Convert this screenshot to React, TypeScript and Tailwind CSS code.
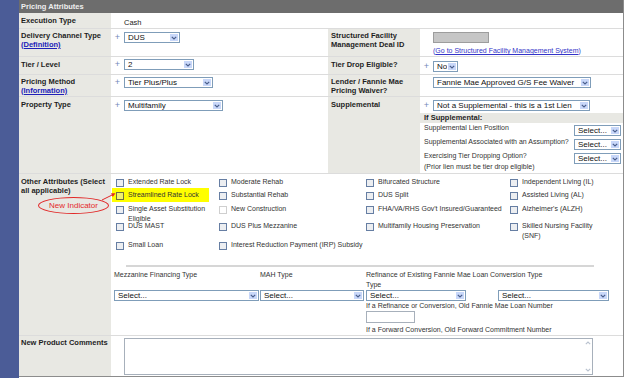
import React from 'react';

function Chevron() {
  return (
    <svg width="6" height="4" viewBox="0 0 6 4">
      <path d="M0.8 0.8 L3 3 L5.2 0.8" fill="none" stroke="#4a5f8c" strokeWidth="1.2" />
    </svg>
  );
}

function Select({ value, className }: { value: string; className: string }) {
  return (
    <div className={`flex h-[11px] shrink-0 border border-[#7f9db9] bg-white ${className}`}>
      <span className="min-w-0 flex-1 overflow-hidden whitespace-nowrap pl-[3px] text-[8px] leading-[9px] text-[#111]">
        {value}
      </span>
      <span className="m-px flex w-[8px] items-center justify-center bg-[#c8d7f9]">
        <Chevron />
      </span>
    </div>
  );
}

function Plus() {
  return <span className="w-[13px] shrink-0 text-center text-[9px] leading-[11px] text-[#7088b8]">+</span>;
}

function Label({ children, className = '' }: { children: React.ReactNode; className?: string }) {
  return (
    <div
      className={`w-[92px] shrink-0 bg-[#e8e8e3] pl-[2px] text-[7.5px] font-bold leading-[9px] text-[#1e1e1e] ${className}`}
    >
      {children}
    </div>
  );
}

function Box({ kind }: { kind?: 'off' | 'hl' }) {
  const cls =
    kind === 'off'
      ? 'border-[#cfcfcf] bg-white'
      : kind === 'hl'
        ? 'border-[#6d6d45] bg-[#f0f070]'
        : 'border-[#667ea3] bg-[#eceef1]';
  return <span className={`mt-[2px] h-[8px] w-[8px] shrink-0 border ${cls}`} />;
}

function Check({ label, kind, wrapClass = '' }: { label: string; kind?: 'off' | 'hl'; wrapClass?: string }) {
  return (
    <div className="flex items-start gap-[4px]">
      <Box kind={kind} />
      <span className={`text-[7px] leading-[10px] text-[#333] ${wrapClass}`}>{label}</span>
    </div>
  );
}

export default function App() {
  return (
    <div className="flex h-[378px] w-[626px] overflow-hidden bg-white font-['Liberation_Sans',Arial,sans-serif] text-[#222]">
      <div className="w-[19px] shrink-0 bg-[#4b5c97]" />
      <div className="flex h-[377px] w-[605px] shrink-0 flex-col border-r border-b border-[#8c8c8c]">
        <div className="h-[13px] shrink-0 bg-[#6d6d6d] pl-[2px] text-[7.5px] font-bold leading-[13px] text-[#efefef]">
          Pricing Attributes
        </div>

        {/* Execution type */}
        <div className="flex h-[16px] shrink-0 border-b border-[#dcdcdc]">
          <Label className="pt-[3px]">Execution Type</Label>
          <div className="pl-[13px] pt-[5px] text-[7.5px] leading-[9px]">Cash</div>
        </div>

        {/* Delivery channel / structured facility */}
        <div className="flex h-[28px] shrink-0 border-b border-[#dcdcdc]">
          <Label className="pt-[2px]">
            Delivery Channel Type
            <br />
            <span className="text-[#2020b8] underline">(Definition)</span>
          </Label>
          <div className="flex w-[217px] shrink-0 items-start pt-[3px]">
            <Plus />
            <Select value="DUS" className="w-[56px]" />
          </div>
          <Label className="pl-[3px] pt-[2px]">Structured Facility Management Deal ID</Label>
          <div className="flex flex-1 flex-col items-start pl-[13px] pt-[3px]">
            <div className="h-[11px] w-[56px] border border-[#9d9d9d] bg-[#c6c6c6]" />
            <div className="mt-[3px] text-[7px] leading-[9px] text-[#3434c8]">
              (<span className="underline">Go to Structured Facility Management System</span>)
            </div>
          </div>
        </div>

        {/* Tier */}
        <div className="flex h-[18px] shrink-0 border-b border-[#dcdcdc]">
          <Label className="pt-[3px]">Tier / Level</Label>
          <div className="flex w-[217px] shrink-0 items-start pt-[2px]">
            <Plus />
            <Select value="2" className="w-[70px]" />
          </div>
          <Label className="pl-[3px] pt-[3px]">Tier Drop Eligible?</Label>
          <div className="flex flex-1 items-start pt-[4px]">
            <Plus />
            <Select value="No" className="w-[25px]" />
          </div>
        </div>

        {/* Pricing method */}
        <div className="flex h-[22px] shrink-0 border-b border-[#dcdcdc]">
          <Label className="pt-[2px]">
            Pricing Method
            <br />
            <span className="text-[#2020b8] underline">(Information)</span>
          </Label>
          <div className="flex w-[217px] shrink-0 items-start pt-[2px]">
            <Plus />
            <Select value="Tier Plus/Plus" className="w-[89px]" />
          </div>
          <Label className="pl-[3px] pt-[2px]">Lender / Fannie Mae Pricing Waiver?</Label>
          <div className="flex flex-1 items-start pl-[13px] pt-[2px]">
            <Select value="Fannie Mae Approved G/S Fee Waiver" className="w-[158px]" />
          </div>
        </div>

        {/* Property / supplemental */}
        <div className="flex h-[77px] shrink-0 border-b border-[#dcdcdc]">
          <Label className="pt-[3px]">Property Type</Label>
          <div className="flex w-[217px] shrink-0 items-start pt-[3px]">
            <Plus />
            <Select value="Multifamily" className="w-[99px]" />
          </div>
          <Label className="pl-[3px] pt-[3px]">Supplemental</Label>
          <div className="flex flex-1 flex-col">
            <div className="flex items-start pt-[3px]">
              <Plus />
              <Select value="Not a Supplemental - this is a 1st Lien" className="w-[157px]" />
            </div>
            <div className="mt-[2px] h-[10px] bg-[#e8e8e3] pl-[4px] text-[7.5px] font-bold leading-[10px] text-[#1e1e1e]">
              If Supplemental:
            </div>
            <div className="flex h-[14px] items-start justify-between pl-[4px] pr-[2px] text-[7px] text-[#333]">
              <span className="leading-[10px]">Supplemental Lien Position</span>
              <Select value="Select..." className="mt-[2px] w-[47px]" />
            </div>
            <div className="flex h-[14px] items-start justify-between pl-[4px] pr-[2px] text-[7px] text-[#333]">
              <span className="leading-[10px]">Supplemental Associated with an Assumption?</span>
              <Select value="Select..." className="mt-[2px] w-[47px]" />
            </div>
            <div className="flex items-start justify-between pl-[4px] pr-[2px] text-[7px] text-[#333]">
              <span className="-mt-[1px] leading-[11px]">
                Exercising Tier Dropping Option?
                <br />
                (Prior lien must be tier drop eligible)
              </span>
              <Select value="Select..." className="mt-[2px] w-[47px]" />
            </div>
          </div>
        </div>

        {/* Other attributes */}
        <div className="relative flex h-[162px] shrink-0 border-b border-[#dcdcdc]">
          <Label className="pt-[3px]">Other Attributes (Select all applicable)</Label>
          <div className="flex flex-1 flex-col">
            <div className="grid grid-cols-[103px_147px_144px_1fr] grid-rows-[13px_14px_17px_19px_13px] pl-[5px] pt-[3px]">
              <Check label="Extended Rate Lock" />
              <Check label="Moderate Rehab" />
              <Check label="Bifurcated Structure" wrapClass="whitespace-nowrap" />
              <Check label="Independent Living (IL)" wrapClass="w-[80px]" />

              <div className="-ml-[4px] -mt-[2px] flex h-[14px] w-[97px] items-start gap-[4px] bg-[#ffff00] pl-[4px] pt-[2px]">
                <Box kind="hl" />
                <span className="text-[7px] leading-[10px] text-[#333]">Streamlined Rate Lock</span>
              </div>
              <Check label="Substantial Rehab" />
              <Check label="DUS Split" />
              <Check label="Assisted Living (AL)" wrapClass="w-[80px]" />

              <Check label="Single Asset Substitution Eligible" />
              <Check label="New Construction" kind="off" />
              <Check label="FHA/VA/RHS Gov't Insured/Guaranteed" wrapClass="whitespace-nowrap" />
              <Check label="Alzheimer's (ALZH)" wrapClass="w-[80px]" />

              <Check label="DUS MAST" />
              <Check label="DUS Plus Mezzanine" />
              <Check label="Multifamily Housing Preservation" wrapClass="whitespace-nowrap" />
              <Check label="Skilled Nursing Facility (SNF)" wrapClass="w-[78px]" />

              <Check label="Small Loan" />
              <Check label="Interest Reduction Payment (IRP) Subsidy" wrapClass="whitespace-nowrap" />
            </div>

            <div className="ml-[15px] mt-[12px] h-[2px] w-[468px] bg-[#d6d6d6]" />

            <div className="mt-[3px] flex pl-[3px] text-[7px] text-[#333]">
              <div className="flex w-[146px] shrink-0 flex-col">
                <div className="h-[20px] leading-[10px]">Mezzanine Financing Type</div>
                <Select value="Select..." className="w-[145px]" />
              </div>
              <div className="flex w-[106px] shrink-0 flex-col">
                <div className="h-[20px] leading-[10px]">MAH Type</div>
                <Select value="Select..." className="w-[104px]" />
              </div>
              <div className="flex w-[124px] shrink-0 flex-col">
                <div className="h-[20px] leading-[10px]">Refinance of Existing Fannie Mae Loan Type</div>
                <Select value="Select..." className="w-[100px]" />
                <div className="whitespace-nowrap leading-[9px]">If a Refinance or Conversion, Old Fannie Mae Loan Number</div>
                <div className="mt-[1px] h-[12px] w-[49px] border border-[#a7b0bb] bg-white" />
                <div className="mt-[2px] whitespace-nowrap leading-[9px]">If a Forward Conversion, Old Forward Commitment Number</div>
              </div>
              <div className="flex flex-1 flex-col">
                <div className="h-[20px] leading-[10px]">Conversion Type</div>
                <Select value="Select..." className="ml-[8px] w-[111px]" />
              </div>
            </div>
          </div>

          {/* new indicator callout */}
          <div className="absolute left-[19px] top-[23px] flex h-[17px] w-[71px] items-center justify-center rounded-[50%] border border-[#e12828] text-[8px] text-[#e42a2a]">
            New Indicator
          </div>
          <svg className="absolute left-[80px] top-[15px]" width="20" height="14" viewBox="0 0 20 14">
            <line x1="3" y1="11" x2="13.5" y2="5.8" stroke="#e12828" strokeWidth="1" />
            <polygon points="16.5,4.3 13.8,7.9 12.0,4.3" fill="#e12828" />
          </svg>
        </div>

        {/* comments */}
        <div className="flex h-[40px] shrink-0">
          <Label className="pt-[2px]">New Product Comments</Label>
          <div className="flex-1 pl-[13px] pt-[2px]">
            <div className="flex h-[37px] w-[469px] justify-end border border-[#a7b0bb] bg-white">
              <div className="flex w-[9px] flex-col items-center justify-between py-[2px]">
                <svg width="6" height="4" viewBox="0 0 6 4">
                  <path d="M0.8 3.2 L3 1 L5.2 3.2" fill="none" stroke="#b9c2cf" strokeWidth="1.1" />
                </svg>
                <svg width="6" height="4" viewBox="0 0 6 4">
                  <path d="M0.8 0.8 L3 3 L5.2 0.8" fill="none" stroke="#b9c2cf" strokeWidth="1.1" />
                </svg>
              </div>
            </div>
          </div>
        </div>
      </div>
    </div>
  );
}
